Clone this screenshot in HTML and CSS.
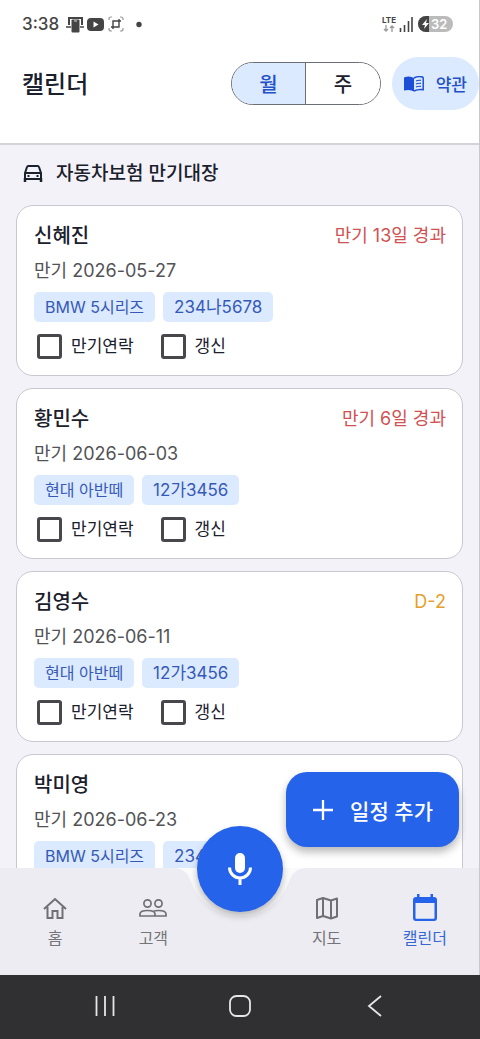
FILE: index.html
```html
<!DOCTYPE html>
<html lang="ko">
<head>
<meta charset="utf-8">
<meta name="viewport" content="width=device-width, initial-scale=1">
<title>캘린더</title>
<link rel="stylesheet" href="styles.css">
</head>
<body>
<div class="app">
  <div class="status">
    <span class="clock">3:38</span>
    <svg class="status-left" width="78" height="20" viewBox="0 0 78 20" aria-hidden="true">
      <path d="M2 3h15v8h-2V5H4v6H2z" fill="#444"/><path d="M0 13h5M14 13h4" stroke="#444" stroke-width="1.500"/><rect x="5.500" y="5.500" width="8" height="13" rx="1" fill="#444"/><path d="M8 7h3" stroke="#ddd"/>
      <rect x="21" y="4" width="17" height="13" rx="4" fill="#444"/><path d="M27.500 7.500v6l5-3z" fill="#fff"/>
      <path d="M43 6V5q0-2 2-2h1M54 3h1q2 0 2 2v1M57 14v1q0 2-2 2h-1M46 17h-1q-2 0-2-2v-1" fill="none" stroke="#999" stroke-width="1.200"/>
      <path d="M45 13h8V5M47 15V7h8" fill="none" stroke="#444" stroke-width="1.400"/>
      <circle cx="73" cy="10.500" r="2.700" fill="#444"/>
    </svg>
    <div class="network"><span class="lte">LTE</span>
      <svg width="12" height="7" viewBox="0 0 12 7" fill="none" stroke="#999" stroke-width="1.300" aria-hidden="true"><path d="M3 0v6M1 4l2 2 2-2M9 7V1M7 3l2-2 2 2"/></svg>
    </div>
    <svg width="14" height="16" viewBox="0 0 14 16" fill="none" stroke="#444" stroke-width="1.600" aria-hidden="true"><path d="M1.500 16v-4M5.500 16V9M9.500 16V5M13 16V1"/></svg>
    <span class="battery"><svg width="11" height="16" viewBox="0 0 11 16" aria-hidden="true"><path d="M11 0H8a8 8 0 0 0 0 16h3z" fill="#444"/><path d="M9 3 4 9h3l-1 4 5-6H8z" fill="#fff"/></svg>32</span>
  </div>

  <header class="appbar">
    <h1>캘린더</h1>
    <div class="segments" role="group" aria-label="보기">
      <button type="button" class="segment selected" aria-pressed="true">월</button>
      <button type="button" class="segment" aria-pressed="false">주</button>
    </div>
    <button type="button" class="terms">
      <svg width="20" height="16" viewBox="0 0 20 16" aria-hidden="true"><path d="M10 2Q6-.500 1 1 0 1.300 0 2v12.500Q6 13 10 15.500z" fill="#1d4ed8"/><path d="M10 2q4-2.200 8.500-1 .700.300.700 1v11.700Q14 13 10 15" fill="none" stroke="#1d4ed8" stroke-width="1.500"/><path d="M12 5q2-1 5-.700M12 8q2-1 5-.700M12 11q2-1 5-.700" fill="none" stroke="#1d4ed8" stroke-width="1.200"/></svg>
      약관
    </button>
  </header>

  <main class="content">
    <h2 class="section-title">
      <svg width="20" height="18" viewBox="0 0 20 18" fill="none" stroke="#1a202c" stroke-width="2" stroke-linejoin="round" aria-hidden="true"><path d="M2 8 4 2Q4.300 1 5.300 1h9.400q1 0 1.300 1l2 6v6H2zM2 8h16"/><path d="M2 13v4M18 13v4" stroke-width="2.500"/><path d="M4.500 11h2M13.500 11h2"/></svg>
      자동차보험 만기대장
    </h2>

    <article class="card">
      <div class="card-head"><h3>신혜진</h3><span class="due late">만기 13일 경과</span></div>
      <p class="date">만기 2026-05-27</p>
      <div class="chips"><span class="chip">BMW 5시리즈</span><span class="chip plate">234나5678</span></div>
      <div class="checks"><label><input type="checkbox">만기연락</label><label><input type="checkbox">갱신</label></div>
    </article>
    <article class="card">
      <div class="card-head"><h3>황민수</h3><span class="due late">만기 6일 경과</span></div>
      <p class="date">만기 2026-06-03</p>
      <div class="chips"><span class="chip">현대 아반떼</span><span class="chip plate">12가3456</span></div>
      <div class="checks"><label><input type="checkbox">만기연락</label><label><input type="checkbox">갱신</label></div>
    </article>
    <article class="card">
      <div class="card-head"><h3>김영수</h3><span class="due soon">D-2</span></div>
      <p class="date">만기 2026-06-11</p>
      <div class="chips"><span class="chip">현대 아반떼</span><span class="chip plate">12가3456</span></div>
      <div class="checks"><label><input type="checkbox">만기연락</label><label><input type="checkbox">갱신</label></div>
    </article>
    <article class="card">
      <div class="card-head"><h3>박미영</h3></div>
      <p class="date">만기 2026-06-23</p>
      <div class="chips"><span class="chip">BMW 5시리즈</span><span class="chip plate">234나5678</span></div>
    </article>
  </main>

  <nav class="tabs">
    <div class="tabs-shape" aria-hidden="true">
      <span class="side"></span>
      <svg width="150" height="107" viewBox="0 0 150 107"><path d="M0 0h8q14 0 18 14a52 52 0 0 0 98 0Q128 0 142 0h8v107H0z" fill="#edecf2"/></svg>
      <span class="side"></span>
    </div>
    <a class="tab" href="#home"><svg width="24" height="26" viewBox="0 0 24 26" fill="none" stroke="#707074" stroke-width="2" aria-hidden="true"><path d="M1 14 12 4l11 10M4.500 12v11h5v-7h5v7h5V12"/></svg>홈</a>
    <a class="tab" href="#customers"><svg width="28" height="26" viewBox="0 0 28 26" fill="none" stroke="#707074" stroke-width="1.700" aria-hidden="true"><circle cx="8.500" cy="8.500" r="3.600"/><circle cx="19.500" cy="8.500" r="3.600"/><path d="M1 21v-2q0-3.500 7.500-3.500T16 19v2zM16 21h11v-2q0-3.500-7.500-3.500-3 0-5 .700"/></svg>고객</a>
    <div class="mic-slot">
      <button type="button" class="mic" aria-label="음성 입력">
        <svg width="24" height="34" viewBox="0 0 24 34" aria-hidden="true"><rect x="7" y="1" width="10" height="20" rx="5" fill="#fff"/><path d="M1.500 15.500a10.500 10.500 0 0 0 21 0M12 26v7" fill="none" stroke="#fff" stroke-width="3"/></svg>
      </button>
    </div>
    <a class="tab" href="#map"><svg width="24" height="26" viewBox="0 0 24 26" fill="none" stroke="#707074" stroke-width="2" stroke-linejoin="round" aria-hidden="true"><path d="m2 5 6-2 8 2.500 6-2v18l-6 2L8 21l-6 2zM8 3v18M16 5.500v18"/></svg>지도</a>
    <a class="tab active" href="#calendar" aria-current="page"><svg width="26" height="28" viewBox="0 0 26 28" aria-hidden="true"><path d="M5 0h2.500v3h11V0H21v3h1q3 0 3 3v18q0 3-3 3H4q-3 0-3-3V6q0-3 3-3h1zM3.500 9v15q0 .700.700.700h17.600q.700 0 .700-.700V9z" fill="#2563eb" fill-rule="evenodd"/></svg>캘린더</a>
  </nav>
  <button type="button" class="add"><svg width="20" height="20" viewBox="0 0 20 20" stroke="#fff" stroke-width="2.300" aria-hidden="true"><path d="M10 0v20M0 10h20"/></svg>일정 추가</button>

  <div class="system">
    <button type="button" aria-label="최근 앱"><svg width="22" height="22" viewBox="0 0 22 22" stroke="#e6e6e6" stroke-width="1.800" aria-hidden="true"><path d="M2.500 1v20M11 1v20M19.500 1v20"/></svg></button>
    <button type="button" aria-label="홈 화면"><svg width="22" height="22" viewBox="0 0 22 22" fill="none" stroke="#e6e6e6" stroke-width="1.800" aria-hidden="true"><rect x="1" y="1" width="20" height="20" rx="6.500"/></svg></button>
    <button type="button" aria-label="뒤로"><svg width="22" height="22" viewBox="0 0 22 22" fill="none" stroke="#e6e6e6" stroke-width="1.800" aria-hidden="true"><path d="M17 1 5 11l12 10"/></svg></button>
  </div>
</div>
</body>
</html>
```

FILE: styles.css
```css
* { box-sizing: border-box; }
body {
  margin: 0;
  font-family: Inter, "Noto Sans CJK KR", sans-serif;
  color: #1a202c;
}
h1, h2, h3, p { margin: 0; }
button { font: inherit; border: 0; padding: 0; cursor: pointer; }
svg { flex: none; display: block; }

.app {
  height: 100vh;
  display: grid;
  grid-template-columns: minmax(0, 1fr);
  grid-template-rows: 48px 97px minmax(0, 1fr) auto 64px;
  position: relative;
  background: #f3f2f8;
}
.app::after {
  content: "";
  position: absolute;
  inset: 0 0 64px auto;
  width: 1px;
  background: #c9c9cd;
}

.status {
  grid-row: 1;
  display: flex;
  align-items: center;
  padding: 0 27px 0 22px;
  background: #fff;
  color: #444;
}
.clock { font-size: 17px; font-weight: 500; line-height: 20px; }
.status-left { margin-left: 7px; margin-right: auto; }
.network {
  display: flex;
  flex-direction: column;
  align-items: center;
  margin-right: 3px;
}
.lte { font-size: 8px; line-height: 9px; font-weight: 700; }
.battery {
  display: flex;
  align-items: center;
  gap: 2px;
  width: 35px;
  margin-left: 5px;
  border-radius: 8px;
  background: #bbb;
  color: #fff;
  font-size: 13px;
  line-height: 16px;
  font-weight: 600;
}

.appbar {
  grid-row: 2;
  display: flex;
  align-items: flex-start;
  padding: 9px 1px 0 22px;
  background: #fff;
  border-bottom: 2px solid #d4d3da;
}
h1 { font-size: 24px; line-height: 55px; font-weight: 500; margin-right: auto; }
.segments {
  display: flex;
  width: 150px;
  height: 43px;
  margin: 5px 11px 0 0;
  border: 1px solid #6b6e76;
  border-radius: 22px;
  overflow: hidden;
}
.segment { flex: 1; background: #fff; font-size: 20px; font-weight: 500; color: #1a202c; }
.segment.selected { background: #dbeafe; color: #2450c8; border-right: 1px solid #6b6e76; }
.terms {
  display: flex;
  align-items: center;
  gap: 12px;
  height: 53px;
  padding: 0 12px;
  border-radius: 27px;
  background: #dbeafe;
  color: #2450c8;
  font-size: 17px;
  font-weight: 500;
}

.content {
  grid-row: 3;
  overflow: hidden;
  padding: 15px 17px 0 16px;
  display: flex;
  flex-direction: column;
  gap: 12px;
}
.section-title {
  display: flex;
  align-items: center;
  gap: 13px;
  margin-bottom: 5px;
  padding-left: 7px;
  font-size: 19px;
  line-height: 28px;
  font-weight: 500;
}
.card {
  flex: none;
  display: flex;
  flex-direction: column;
  gap: 8px;
  padding: 16px 16px 13px 17px;
  border: 1px solid #c9c8d0;
  border-radius: 17px;
  background: #fff;
}
.card:last-child { padding-bottom: 54px; }
.card-head { display: flex; justify-content: space-between; line-height: 28px; }
h3 { font-size: 20px; font-weight: 500; }
.due { font-size: 18px; }
.late { color: #d05252; }
.soon { color: #e5a02c; }
.date { font-size: 18px; line-height: 26px; color: #525356; }
.chips { display: flex; gap: 8px; }
.chip {
  padding: 0 11px;
  border-radius: 5px;
  background: #dbeafe;
  color: #3659b8;
  font-size: 16px;
  line-height: 30px;
}
.plate { font-size: 17px; }
.checks { display: flex; gap: 27px; padding-left: 3px; }
.checks label { display: flex; align-items: center; gap: 9px; font-size: 17px; line-height: 32px; }
.checks input {
  appearance: none;
  width: 25px;
  height: 25px;
  margin: 0;
  border: 3px solid #48484c;
  border-radius: 3px;
}

.tabs {
  grid-row: 4;
  position: relative;
  display: grid;
  grid-template-columns: 1fr 1fr 75px 1fr 1fr;
  min-height: 107px;
  padding: 24px 6px 0;
  background: linear-gradient(#fbfbfc, #f3f3f6 60px);
}
.tabs-shape { position: absolute; inset: 0; display: flex; }
.side { flex: 1; background: #edecf2; }
.tab {
  position: relative;
  display: flex;
  flex-direction: column;
  align-items: center;
  font-size: 16px;
  line-height: 28px;
  color: #747478;
  text-decoration: none;
}
.tab svg { height: 32px; }
.tab.active { color: #3568d4; }
.mic {
  position: absolute;
  left: calc(50% - 43px);
  top: -42px;
  width: 86px;
  height: 86px;
  display: grid;
  place-items: center;
  border-radius: 50%;
  background: #2563eb;
  box-shadow: 0 4px 7px rgba(0, 0, 0, .25);
}
.add {
  position: absolute;
  right: 21px;
  bottom: 192px;
  display: flex;
  align-items: center;
  gap: 17px;
  height: 75px;
  padding: 0 26px 0 27px;
  border-radius: 21px;
  background: #2563eb;
  color: #fff;
  font-size: 21px;
  font-weight: 500;
  box-shadow: 0 5px 9px rgba(0, 0, 0, .28);
}

.system {
  grid-row: 5;
  display: flex;
  justify-content: space-around;
  align-items: center;
  padding: 0 37px 2px;
  background: #303032;
}
.system button { background: none; }
```
